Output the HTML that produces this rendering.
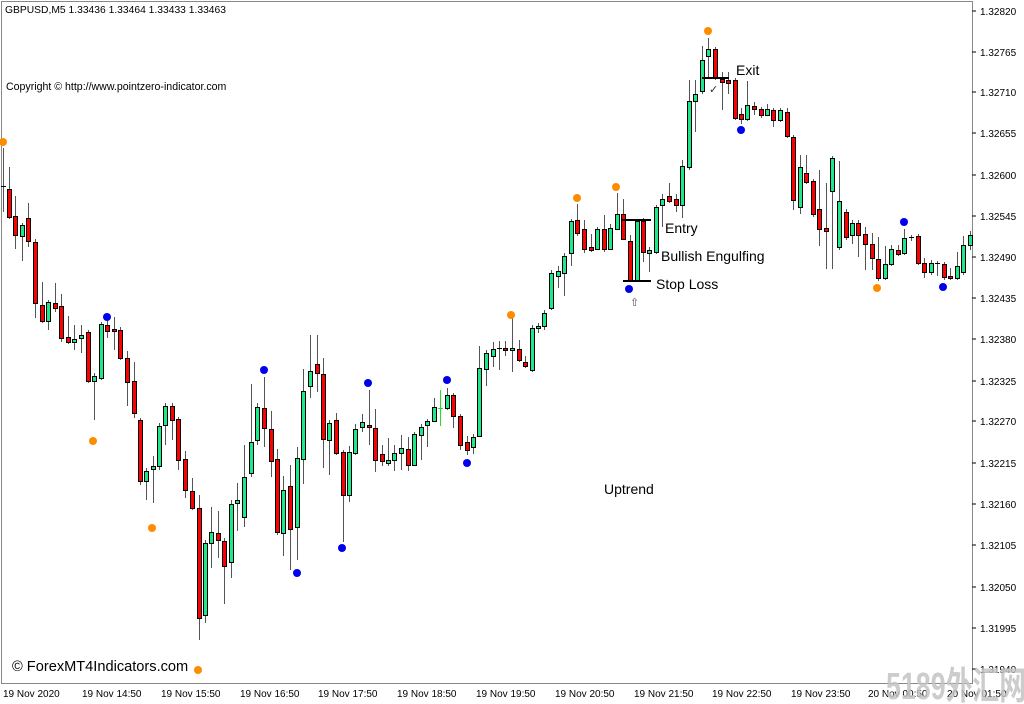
<!DOCTYPE html>
<html><head><meta charset="utf-8"><style>
body{margin:0;width:1024px;height:704px;overflow:hidden;background:#fff;font-family:"Liberation Sans",sans-serif}
svg{display:block}
</style></head><body>
<svg id="s" width="1024" height="704" xmlns="http://www.w3.org/2000/svg">
<rect x="0" y="0" width="1024" height="704" fill="#fff"/>
<rect x="1.5" y="1.5" width="971" height="682" fill="none" stroke="#888" stroke-width="1"/>
<g id="c"></g>
<g font-family="Liberation Sans, sans-serif" font-size="10.3" fill="#000">
<text x="5" y="13">GBPUSD,M5  1.33436 1.33464 1.33433 1.33463</text>
</g>
<text x="6" y="90" font-family="Liberation Sans, sans-serif" font-size="10.6" fill="#000">Copyright © http://www.pointzero-indicator.com</text>
<g font-family="Liberation Sans, sans-serif" font-size="10" fill="#000" id="ax"></g>
<g font-family="Liberation Sans, sans-serif" font-size="10" fill="#000">
<text x="3" y="697">19 Nov 2020</text><text x="82" y="697">19 Nov 14:50</text><text x="161" y="697">19 Nov 15:50</text><text x="240" y="697">19 Nov 16:50</text><text x="318" y="697">19 Nov 17:50</text><text x="397" y="697">19 Nov 18:50</text><text x="476" y="697">19 Nov 19:50</text><text x="555" y="697">19 Nov 20:50</text><text x="634" y="697">19 Nov 21:50</text><text x="712" y="697">19 Nov 22:50</text><text x="791" y="697">19 Nov 23:50</text><text x="868" y="697">20 Nov 00:50</text><text x="947" y="697">20 Nov 01:50</text>
</g>
<g font-family="Liberation Sans, sans-serif" font-size="14" fill="#000">
<text x="665" y="233">Entry</text>
<text x="661" y="261">Bullish Engulfing</text>
<text x="656" y="289">Stop Loss</text>
<text x="736" y="75">Exit</text>
<text x="604" y="494">Uptrend</text>
<text x="12" y="671" font-size="14.6">© ForexMT4Indicators.com</text>
</g>
<text x="630" y="306" font-size="11" fill="#555">⇧</text>
<text x="709" y="93" font-size="11" fill="#333">✓</text>
<g stroke="#000" stroke-width="2">
<line x1="622" y1="220" x2="651" y2="220"/>
<line x1="623" y1="281" x2="651" y2="281"/>
<line x1="702" y1="78" x2="729" y2="78"/>
</g>
<text x="886" y="699" font-size="38" font-weight="bold" fill="#c4c4c4" opacity="0.85" font-family="Liberation Sans, Noto Sans CJK SC, sans-serif" textLength="140" lengthAdjust="spacingAndGlyphs">5189外汇网</text>
</svg>
<script>
var d=[[3,186,188,'k',148,212],[9,189,217,'r',167,219],[15,216,235,'r',196,249],[22,225,236,'g',223,261],[28,218,241,'r',203,247],[35,242,303,'r',239,318],[42,305,321,'r',282,323],[48,302,321,'g',300,330],[55,303,308,'r',283,312],[61,306,338,'r',294,342],[68,337,342,'r',316,344],[74,339,342,'g',325,350],[81,335,338,'g',325,353],[88,332,381,'r',330,383],[94,376,381,'g',373,420],[101,324,378,'g',322,380],[107,325,331,'r',314,338],[114,329,331,'r',317,350],[120,330,358,'r',327,360],[127,358,382,'r',351,406],[134,381,413,'r',362,418],[140,420,481,'r',418,485],[146,471,481,'g',468,500],[153,466,469,'g',456,503],[159,426,466,'g',423,470],[165,406,425,'g',403,445],[172,406,420,'r',403,440],[178,419,460,'r',417,470],[185,459,490,'r',451,498],[192,491,508,'r',478,510],[199,508,618,'r',495,640],[205,543,615,'g',540,623],[211,532,543,'g',507,568],[218,533,540,'r',511,558],[224,541,566,'r',538,604],[231,504,562,'g',500,578],[237,500,503,'g',483,531],[244,477,517,'g',445,527],[251,442,473,'g',384,477],[257,407,440,'g',403,445],[264,408,428,'r',377,447],[271,429,461,'r',411,477],[277,459,532,'r',449,535],[283,490,533,'g',476,556],[290,486,529,'r',465,570],[297,458,527,'g',447,560],[303,391,459,'g',369,484],[310,371,386,'g',335,398],[317,364,373,'r',335,392],[323,374,439,'r',358,468],[329,423,440,'g',420,475],[336,420,453,'r',413,455],[343,452,495,'r',450,542],[349,452,495,'g',446,502],[355,429,453,'g',424,455],[362,422,427,'g',414,432],[369,425,427,'r',390,445],[375,428,460,'r',409,472],[382,454,461,'r',445,466],[388,460,463,'g',438,466],[394,453,460,'g',445,471],[401,448,453,'g',435,470],[408,449,465,'r',437,471],[414,434,465,'g',432,460],[421,427,435,'g',424,460],[427,421,425,'g',419,447],[434,407,421,'g',398,421],[440,408,409,'l',390,426],[447,395,408,'g',388,410],[453,395,416,'r',393,428],[460,416,445,'r',414,450],[467,442,450,'r',436,455],[473,437,447,'g',434,454],[479,368,436,'g',346,437],[486,353,369,'g',350,386],[493,349,356,'g',342,367],[499,348,350,'k',341,370],[505,348,350,'r',341,356],[512,348,350,'g',317,372],[519,349,360,'r',340,362],[525,362,366,'r',356,368],[532,328,370,'g',325,372],[538,326,328,'g',323,333],[544,313,326,'g',310,330],[551,273,308,'g',270,310],[558,271,276,'g',266,288],[564,256,273,'g',253,296],[571,221,253,'g',219,266],[577,220,233,'r',204,236],[584,229,249,'r',220,253],[591,247,250,'r',234,252],[597,229,249,'g',227,250],[604,229,249,'r',215,252],[610,228,249,'g',224,250],[617,214,229,'g',193,230],[623,214,239,'r',199,240],[630,241,280,'r',235,281],[637,221,280,'g',219,281],[643,221,252,'r',218,262],[649,250,253,'g',247,272],[656,207,252,'g',205,254],[662,199,205,'g',194,227],[669,196,201,'r',183,203],[676,199,205,'r',194,212],[682,166,205,'g',160,218],[689,101,167,'g',80,170],[695,94,101,'g',80,132],[702,60,91,'g',46,94],[708,49,56,'g',38,78],[715,49,77,'r',47,80],[722,79,82,'r',72,110],[728,80,83,'r',72,94],[735,80,118,'r',78,120],[741,114,119,'r',108,124],[747,105,119,'g',81,121],[754,106,109,'r',102,115],[761,109,115,'r',107,118],[767,109,115,'g',104,116],[773,110,120,'r',108,127],[780,110,120,'g',108,122],[787,112,136,'r',108,138],[793,137,200,'r',135,210],[800,167,207,'g',155,214],[806,173,182,'r',155,184],[813,181,214,'r',179,217],[819,209,229,'r',170,246],[826,228,231,'r',183,269],[832,158,191,'g',156,269],[839,201,247,'g',161,250],[846,212,237,'r',209,240],[852,223,235,'g',220,244],[858,223,235,'r',220,257],[865,234,244,'r',227,270],[872,244,258,'r',233,270],[878,259,278,'r',237,281],[885,264,278,'g',246,280],[891,249,264,'g',245,266],[898,250,254,'r',245,256],[904,238,253,'g',229,255],[911,237,238,'k',235,241],[918,236,263,'r',234,265],[924,263,272,'r',258,278],[931,263,272,'g',260,275],[937,263,264,'k',261,276],[944,264,277,'r',262,280],[950,276,278,'r',268,280],[957,266,278,'g',252,280],[963,245,272,'g',236,275],[970,235,245,'g',231,250]];
var h='';
d.forEach(function(a){var x=a[0],t=a[1],b=a[2],c=a[3];
h+='<line x1="'+(x+.5)+'" y1="'+a[4]+'" x2="'+(x+.5)+'" y2="'+a[5]+'" stroke="'+(c=='l'?'#22e022':'#555')+'" stroke-width="1"/>';
if(c=='k'||c=='l'){h+='<line x1="'+(x-2)+'" y1="'+(t+.5)+'" x2="'+(x+3)+'" y2="'+(t+.5)+'" stroke="'+(c=='l'?'#22e022':'#000')+'"/>';}
else{h+='<rect x="'+(x-1.5)+'" y="'+(t+.5)+'" width="4" height="'+Math.max(1,b-t)+'" fill="'+(c=='g'?'#1de98b':'#f00')+'" stroke="#000" stroke-width="1"/>';}
});
[[3,142],[93,441],[152,528],[198,670],[511,315],[577,198],[616,187],[708,31],[877,288]].forEach(function(p){h+='<circle cx="'+p[0]+'" cy="'+p[1]+'" r="4" fill="#ff8c00"/>';});
[[107,317],[264,370],[297,573],[342,548],[368,383],[447,380],[467,463],[629,289],[741,130],[904,222],[943,287]].forEach(function(p){h+='<circle cx="'+p[0]+'" cy="'+p[1]+'" r="4" fill="#0000ee"/>';});
document.getElementById('c').innerHTML=h;
var L=[['1.32820',11],['1.32765',52],['1.32710',92],['1.32655',133],['1.32600',175],['1.32545',216],['1.32490',257],['1.32435',298],['1.32380',339],['1.32325',381],['1.32270',421],['1.32215',463],['1.32160',504],['1.32105',545],['1.32050',587],['1.31995',628],['1.31940',669]],g='';
L.forEach(function(l){g+='<line x1="972" y1="'+l[1]+'" x2="976" y2="'+l[1]+'" stroke="#000"/><text x="980" y="'+(l[1]+4)+'">'+l[0]+'</text>';});
document.getElementById('ax').innerHTML=g;
</script>
</body></html>
